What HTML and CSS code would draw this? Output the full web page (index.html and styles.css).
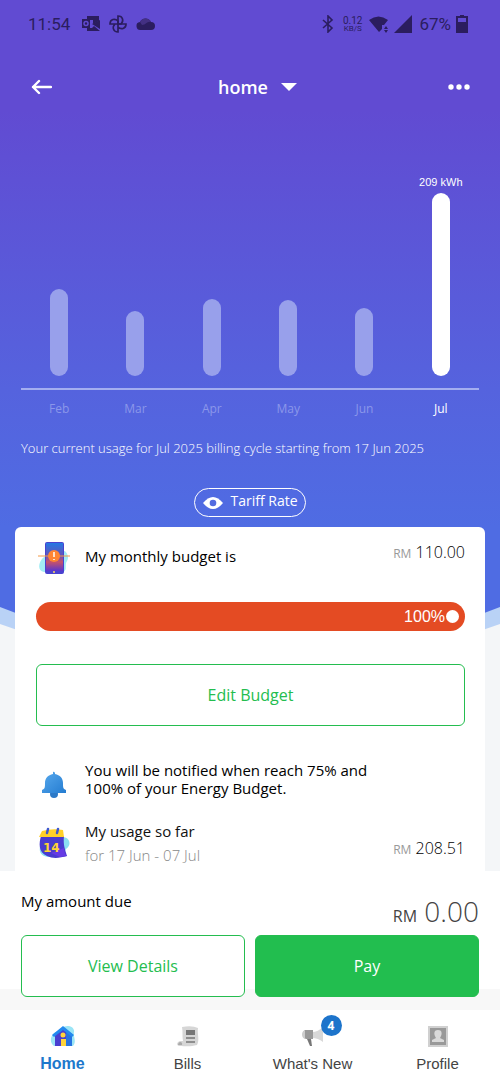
FILE: index.html
```html
<!DOCTYPE html>
<html lang="en">
<head>
<meta charset="utf-8">
<meta name="viewport" content="width=device-width, initial-scale=1">
<title>Energy budget</title>
<link rel="stylesheet" href="styles.css">
</head>
<body>
<div class="hero">
  <div class="status">
    <span class="clock">11:54</span>
    <svg class="s-outlook" width="20" height="16" viewBox="0 0 20 16"><path d="M6 0h12v5l-6 3V4H6z" fill="currentColor"/><path d="M11 8l8-4v9zM6 12h5l2-2 6 5H6z" fill="currentColor"/><path d="M1 3h8v9H1z" fill="currentColor"/><circle cx="5" cy="7.500" r="2" fill="none" stroke="#614bd2" stroke-width="1.500"/></svg>
    <svg class="s-fan" width="18" height="18" viewBox="0 0 18 18" fill="none" stroke="currentColor" stroke-width="1.700"><path d="M9 9V1c5 0 6 5 3 8z"/><path d="M9 9h8c0 5-5 6-8 3zM9 9v8c-5 0-6-5-3-8zM9 9H1c0-5 5-6 8-3z"/></svg>
    <svg class="s-cloud" width="19" height="13" viewBox="0 0 19 13"><path d="M5 12a4 4 0 0 1-1-8 6 6 0 0 1 11 0 4 4 0 0 1 0 8z" fill="#2b1d5f"/><path d="M4 4a6 6 0 0 1 11 0c-4-1-5 3-9 3z" fill="#433083"/></svg>
    <span class="spacer"></span>
    <svg class="s-bt" width="12" height="18" viewBox="0 0 12 18" fill="none" stroke="currentColor" stroke-width="1.600"><path d="M1 5l9 8-4 4V1l4 4-9 8"/></svg>
    <span class="rate"><span class="rate-n">0.12</span><span class="rate-u">KB/S</span></span>
    <svg class="s-wifi" width="20" height="17" viewBox="0 0 20 17" fill="currentColor"><path d="M0 4Q9.500-3 19 4l-4 5h-2v4l-3 3z"/><path d="M15 13l2-3 2 3zM15 14h4l-2 3z"/></svg>
    <svg class="s-cell" width="18" height="18" viewBox="0 0 18 18"><path d="M18 0v18H0z" fill="currentColor"/></svg>
    <span class="pct">67%</span>
    <svg class="s-batt" width="12" height="18" viewBox="0 0 12 18"><path d="M4 0h4v1h4v17H0V1h4z" fill="currentColor"/><path d="M2 3h8v4H2z" fill="#614bd2"/></svg>
  </div>

  <header class="topbar">
    <button class="icon-btn" aria-label="Back"><svg width="22" height="18" viewBox="0 0 22 18" fill="none" stroke="#fff" stroke-width="2.400" stroke-linecap="round" stroke-linejoin="round"><path d="M21 9H3M9 3L3 9l6 6"/></svg></button>
    <button class="account">home<svg width="16" height="9" viewBox="0 0 16 9"><path d="M0 0h16L8 8z" fill="#fff"/></svg></button>
    <button class="icon-btn more" aria-label="More"><svg width="22" height="6" viewBox="0 0 22 6" fill="#fff"><circle cx="3" cy="3" r="2.700"/><circle cx="11" cy="3" r="2.700"/><circle cx="19" cy="3" r="2.700"/></svg></button>
  </header>

  <div class="chart">
    <div class="col"><span class="bar" style="height:87px"></span></div>
    <div class="col"><span class="bar" style="height:65px"></span></div>
    <div class="col"><span class="bar" style="height:77px"></span></div>
    <div class="col"><span class="bar" style="height:76px"></span></div>
    <div class="col"><span class="bar" style="height:68px"></span></div>
    <div class="col now"><span class="value">209 kWh</span><span class="bar" style="height:183px"></span></div>
  </div>
  <div class="months"><span>Feb</span><span>Mar</span><span>Apr</span><span>May</span><span>Jun</span><span class="now">Jul</span></div>
  <p class="cycle">Your current usage for Jul 2025 billing cycle starting from 17 Jun 2025</p>
  <button class="tariff"><svg width="20" height="12" viewBox="0 0 20 12"><path d="M0 6Q10-6 20 6 10 18 0 6z" fill="#fff"/><circle cx="10" cy="6" r="3.300" fill="#526be0"/></svg><span>Tariff Rate</span></button>
</div>

<main class="content">
  <svg class="curve" viewBox="0 0 500 110" preserveAspectRatio="none"><path d="M0 0h500v97q-250 90-500 0z" fill="#b9d2f6"/><path d="M0 0h500v80q-250 100-500 0z" fill="#4f6ce3"/></svg>
  <section class="card">
    <div class="row budget">
      <svg class="pic" width="32" height="34" viewBox="0 0 32 34"><defs><linearGradient id="ph" x2="0" y2="1"><stop stop-color="#2478e4"/><stop offset=".45" stop-color="#6652b8"/><stop offset=".68" stop-color="#c5526c"/><stop offset="1" stop-color="#5835cf"/></linearGradient></defs><path d="M6 16c-6 5-7 14 0 15h19c5-2 1-7 4-11s-1-12-5-10z" fill="#a3edf5"/><rect x="7" y="1" width="19" height="32" rx="2" fill="#4942cf"/><rect x="8" y="2" width="17" height="28" fill="url(#ph)"/><path d="M0 15h32" stroke="#f39a47"/><circle cx="16" cy="15" r="6" fill="#ff8533"/><path d="M16 11v5M16 18v1" stroke="#fff" stroke-width="1.500"/><circle cx="16" cy="31" r="1" fill="#ffd35c"/></svg>
      <h2 class="label">My monthly budget is</h2>
      <span class="money"><small>RM</small> 110.00</span>
    </div>
    <div class="progress" role="progressbar" aria-valuenow="100" aria-label="Budget used"><span>100%</span><i></i></div>
    <button class="btn outline">Edit Budget</button>
    <div class="row notice">
      <svg class="pic" width="32" height="28" viewBox="0 0 32 28"><defs><linearGradient id="be" x2="1" y2="1"><stop stop-color="#58a9ed"/><stop offset="1" stop-color="#247cd1"/></linearGradient></defs><circle cx="16" cy="23" r="4" fill="#2c79c7"/><path d="M15 1q1-1 2 1v1c5 1 8 4 8 9 0 4 0 6 3 7v3H4v-3c3-1 3-3 3-7 0-5 3-8 8-9z" fill="url(#be)"/></svg>
      <p>You will be notified when reach 75% and 100% of your Energy Budget.</p>
    </div>
    <div class="row usage">
      <svg class="pic" width="32" height="32" viewBox="0 0 32 32"><path d="M24 10c8 0 10 8 4 12-2 3-2 7-6 8H10C3 29 1 25 2 20z" fill="#8adff3"/><path d="M3 9h23c-1 9 1 13 3 20-7 2-14 3-20 0C0 25 1 16 3 9z" fill="#493bcf"/><path d="M4 4q11-3 21-1l1 7H1z" fill="#ffd029"/><path d="M10 2L9 6M20 2l-1 4" stroke="#3d57cd" stroke-width="2.500" stroke-linecap="round"/><path d="M13 26l9 4 7-1q-3-3-3-8z" fill="#663be4"/><text x="5" y="25" class="date">14</text></svg>
      <div class="usage-text"><h2 class="label">My usage so far</h2><p class="period">for 17 Jun - 07 Jul</p></div>
      <span class="money"><small>RM</small> 208.51</span>
    </div>
  </section>
</main>

<section class="due">
  <div class="due-row"><h2 class="label">My amount due</h2><span class="total"><small>RM</small> 0.00</span></div>
  <div class="actions"><button class="btn outline">View Details</button><button class="btn solid">Pay</button></div>
</section>

<nav class="tabs">
  <a href="#" class="active"><span class="tab-icon"><svg width="26" height="24" viewBox="0 0 26 24"><path d="M3 10C6 7 9 8 12 4c4-4 13-2 12 4-1 5 3 9-1 14H4c-4-3-4-8-1-12z" fill="#9be5f6"/><path d="M5 10l8-6 9 6v12H5z" fill="#493fd0"/><path d="M16 7l6 4v11h-6z" fill="#2773e1"/><path d="M13 2l11 9-2 2-9-7-9 7-2-2z" fill="#2389ee"/><circle cx="13" cy="11" r="2.500" fill="#ffd33b"/><path d="M11 15h5v7h-5z" fill="#ffd33b"/></svg></span>Home</a>
  <a href="#"><span class="tab-icon"><svg width="24" height="22" viewBox="0 0 24 22"><path d="M6 2q10-2 16 1c-1 6 2 12-1 17-7 2-11 1-18 1-3-1-2-4 1-5h3c-1-5 0-9-1-14z" fill="#d6d6d6"/><path d="M2 20c0-4 5-4 4 0z" fill="#aaa"/><path d="M10 5h9v5h-9z" fill="#777"/><path d="M10 13h9M10 17h9" stroke="#777" stroke-width="1.500"/></svg></span>Bills</a>
  <a href="#"><span class="tab-icon"><svg width="22" height="20" viewBox="0 0 22 20"><path d="M10 6q6 0 11-5v15q-5-4-11-4z" fill="#d8d8d8"/><path d="M3 4h8v9H4c-4-1-4-8-1-9z" fill="#999"/><path d="M3 4c-4 1-4 8 0 9z" fill="#ccc"/><path d="M5 13h4l1 7H8z" fill="#777"/></svg><b class="badge">4</b></span>What's New</a>
  <a href="#"><span class="tab-icon"><svg width="20" height="21" viewBox="0 0 20 21"><path d="M0 0h20v21H0z" fill="#d0d0d0"/><path d="M2 2h16v17H2z" fill="#999"/><path d="M10 4c5 0 4 5 2 8l4 2v2H4v-2l4-2C6 9 5 4 10 4z" fill="#d9d9d9"/></svg></span>Profile</a>
</nav>
</body>
</html>
```
FILE: styles.css
```css
* { box-sizing: border-box; }
body { margin: 0; background: #f4f6f8; color: #000; font: 15px/18px "Open Sans", "Noto Sans", sans-serif; }
h2, p { margin: 0; font-size: inherit; font-weight: 400; }
button { margin: 0; padding: 0; border: 0; background: none; color: inherit; font: inherit; cursor: pointer; }
svg { display: block; flex: none; }

.hero { display: flex; flex-direction: column; padding: 0 21px 10px; color: #fff; background: linear-gradient(#614bd2 110px, #5563de 390px, #4f6ce3 100%); }

.status { display: flex; align-items: center; height: 48px; padding: 0 11px 0 7px; color: #2b1d5f; font: 400 17px/20px Roboto, sans-serif; }
.s-outlook { margin-left: 11px; }
.s-fan { margin-left: 8px; }
.s-cloud { margin-left: 9px; }
.spacer { flex: 1; }
.rate { display: flex; flex-direction: column; align-items: center; margin: 0 7px 0 9px; font-size: 10px; line-height: 9px; }
.rate-u { font-size: 8px; line-height: 8px; }
.s-cell { margin-left: 5px; }
.pct { margin: 0 5px 0 7px; }

.topbar { display: flex; align-items: center; justify-content: space-between; height: 78px; padding: 0 9px; }
.account { display: flex; align-items: center; gap: 13px; margin-left: 15px; font-size: 18px; line-height: 24px; font-weight: 600; }

.chart { display: grid; grid-template-columns: repeat(6, 1fr); height: 264px; padding-bottom: 12px; border-bottom: 2px solid #a4aef0; }
.col { display: flex; flex-direction: column; align-items: center; justify-content: flex-end; }
.bar { width: 18px; border-radius: 9px; background: #98a0eb; }
.now .bar { background: #fff; }
.value { margin-bottom: 4px; font: 11px/14px "Liberation Sans", sans-serif; white-space: nowrap; }
.months { display: grid; grid-template-columns: repeat(6, 1fr); margin-top: 10px; text-align: center; font-size: 12px; color: #8b97ea; }
.months .now { color: #fff; }
.cycle { margin-top: 21px; font-size: 13px; font-weight: 300; color: #fff; }
.tariff { display: flex; align-items: center; gap: 7px; align-self: center; height: 29px; margin-top: 31px; padding: 0 7px 0 8px; border: 1px solid #fff; border-radius: 15px; font-size: 14px; }
.tariff span { padding-bottom: 4px; }

.content { position: relative; padding: 0 15px; }
.curve { position: absolute; top: 0; left: 0; width: 100%; height: 110px; }
.card { position: relative; padding: 12px 20px 6px 21px; border-radius: 6px 6px 0 0; background: #fff; }
.row { display: flex; align-items: center; }
.pic { margin: 0 15px 0 2px; }
.money { margin-left: auto; font-size: 16px; line-height: 24px; font-weight: 300; color: #000; white-space: nowrap; }
.money small { font-size: 12px; font-weight: 400; color: #999; }
.budget { height: 38px; }
.budget .money { padding-bottom: 10px; }
.budget .label { padding-bottom: 4px; }
.progress { display: flex; align-items: center; justify-content: flex-end; gap: 1px; height: 29px; margin-top: 25px; padding-right: 6px; border-radius: 15px; background: #e44b23; color: #fff; font: 16px/20px "Liberation Sans", sans-serif; }
.progress i { width: 13px; height: 13px; border-radius: 50%; background: #fff; }
.btn { width: 100%; height: 62px; border: 1px solid #24bd4f; border-radius: 6px; color: #24bd4f; font-size: 16px; background: #fff; }
.card .btn { display: block; margin-top: 33px; }
.btn.solid { background: #22be4f; color: #fff; }
.notice { margin-top: 35px; align-items: flex-start; font-weight: 300; color: #000; }
.notice p { max-width: 290px; }
.notice .pic { margin-top: 10px; }
.usage { height: 44px; margin-top: 22px; }
.usage .label { color: #111; }
.period { margin-top: 6px; font-weight: 300; color: #888; }
.usage .money { padding-top: 12px; }
.date { font: 700 12px "DejaVu Sans", sans-serif; fill: #ffd433; }

.due { padding: 21px 21px 13px; background: linear-gradient(#fff, #fff) top / 100% calc(100% - 21px) no-repeat #f8f8f8; }
.due-row { display: flex; justify-content: space-between; height: 43px; }
.total { padding-top: 2px; font-size: 28px; line-height: 34px; font-weight: 300; color: #444; }
.total small { font-size: 16px; font-weight: 400; }
.actions { display: grid; grid-template-columns: 1fr 1fr; gap: 10px; }

.tabs { display: grid; grid-template-columns: repeat(4, 1fr); height: 73px; background: #fff; }
.tabs a { display: flex; flex-direction: column; align-items: center; padding-top: 12px; color: #444; text-decoration: none; font: 15px/20px "Liberation Sans", sans-serif; }
.tabs .active { color: #1d78cc; font-size: 16px; font-weight: 700; }
.tab-icon { position: relative; display: flex; align-items: center; justify-content: center; width: 26px; height: 28px; margin-bottom: 4px; }
.badge { position: absolute; left: 21px; top: -7px; width: 21px; height: 21px; border-radius: 50%; background: #1d74cb; color: #fff; text-align: center; font: 700 12px/21px "Noto Sans", sans-serif; }
```
